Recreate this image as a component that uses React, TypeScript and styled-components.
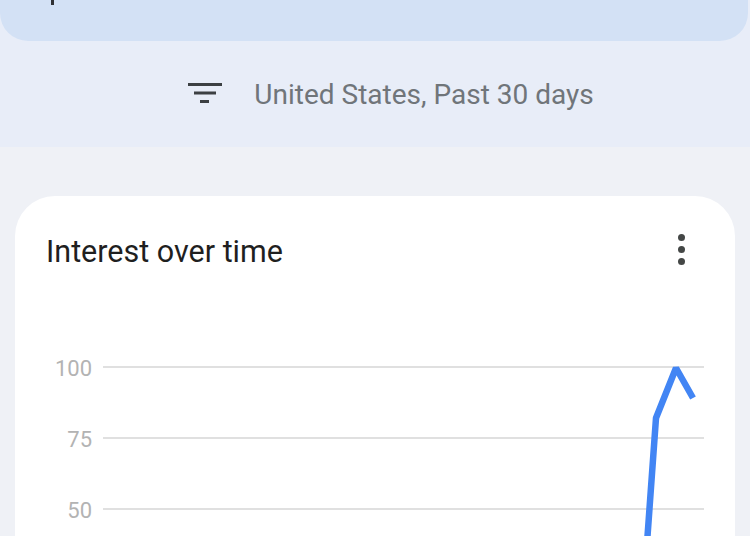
import React from "react";
import styled, { createGlobalStyle } from "styled-components";

const Global = createGlobalStyle`
  html, body { margin: 0; padding: 0; }
  body {
    background: #eff1f6;
    font-family: Roboto, "Noto Sans", Arial, sans-serif;
    width: 750px;
    height: 536px;
    overflow: hidden;
  }
`;

const Page = styled.div`
  display: flex;
  flex-direction: column;
  width: 750px;
  background: #eff1f6;
`;

const Header = styled.div`
  background: #e8edf8;
  display: flex;
  flex-direction: column;
`;

const SearchBar = styled.div`
  height: 41px;
  margin-right: 2px;
  background: #d3e1f5;
  border-radius: 0 0 28px 28px;
  display: flex;
  align-items: flex-start;
  padding-left: 51px;
`;

const Cursor = styled.span`
  width: 3px;
  height: 5px;
  background: #303134;
`;

const FilterRow = styled.div`
  height: 106px;
  display: flex;
  align-items: center;
  justify-content: center;
  gap: 32px;
  padding-left: 32px;
  box-sizing: border-box;
`;

const FilterText = styled.span`
  font-size: 28px;
  color: #70757a;
  line-height: 1;
  padding-top: 2px;
`;

const Main = styled.div`
  padding: 49px 15px 0 15px;
`;

const Card = styled.div`
  background: #ffffff;
  border-radius: 40px;
  height: 420px;
  display: flex;
  flex-direction: column;
`;

const CardHeader = styled.div`
  display: flex;
  align-items: flex-start;
  justify-content: space-between;
  padding: 37px 50px 0 31px;
`;

const Title = styled.h2`
  margin: 0;
  padding-top: 4px;
  font-weight: 400;
  font-size: 30.5px;
  line-height: 1;
  color: #1f1f1f;
`;

const Kebab = styled.div`
  display: flex;
  flex-direction: column;
  gap: 5px;
  padding-top: 1px;
`;

const Dot = styled.span`
  width: 7px;
  height: 7px;
  border-radius: 50%;
  background: #444746;
`;

const ChartWrap = styled.div`
  margin-top: 73px;
`;

const FilterIcon = () => (
  <svg width="34" height="22" viewBox="0 0 34 22">
    <rect x="0" y="0" width="34" height="3" fill="#3c4043" />
    <rect x="6" y="8.5" width="22" height="3" fill="#3c4043" />
    <rect x="12" y="17" width="9" height="3" fill="#3c4043" />
  </svg>
);

const ticks = [
  { label: "100", y: 26 },
  { label: "75", y: 97 },
  { label: "50", y: 168 },
];

const Chart = () => (
  <svg width="720" height="200" viewBox="0 0 720 200">
    {ticks.map((t) => (
      <g key={t.label}>
        <line x1="88" x2="689" y1={t.y} y2={t.y} stroke="#e0e0e0" strokeWidth="2" />
        <text
          x="77"
          y={t.y + 9}
          textAnchor="end"
          fontSize="22"
          fill="#b3b3b3"
          fontFamily="Roboto, sans-serif"
        >
          {t.label}
        </text>
      </g>
    ))}
    <polyline
      points="630,230 641,77 661,27 678,57"
      fill="none"
      stroke="#4285f4"
      strokeWidth="6.5"
      strokeLinejoin="bevel"
    />
  </svg>
);

export default function App() {
  return (
    <>
      <Global />
      <Page>
        <Header>
          <SearchBar>
            <Cursor />
          </SearchBar>
          <FilterRow>
            <FilterIcon />
            <FilterText>United States, Past 30 days</FilterText>
          </FilterRow>
        </Header>
        <Main>
          <Card>
            <CardHeader>
              <Title>Interest over time</Title>
              <Kebab>
                <Dot />
                <Dot />
                <Dot />
              </Kebab>
            </CardHeader>
            <ChartWrap>
              <Chart />
            </ChartWrap>
          </Card>
        </Main>
      </Page>
    </>
  );
}
